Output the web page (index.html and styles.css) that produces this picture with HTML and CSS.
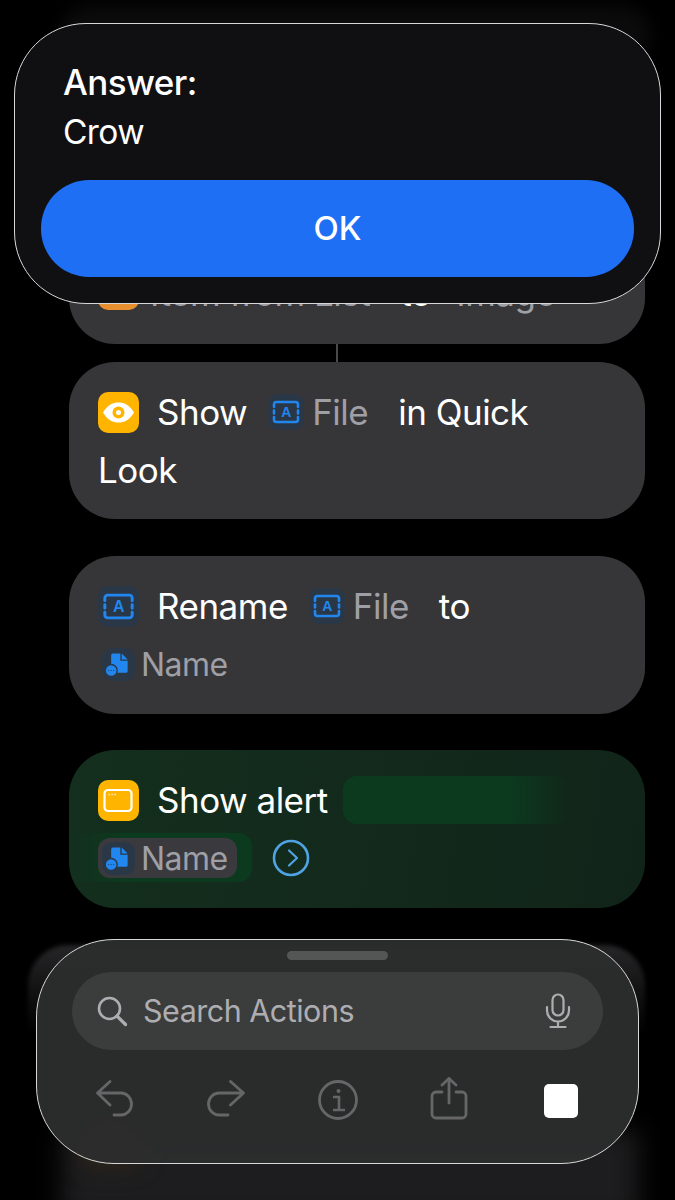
FILE: index.html
```html
<!DOCTYPE html>
<html lang="en">
<head>
    <meta charset="UTF-8">
    <meta name="viewport" content="width=device-width, initial-scale=1.0">
    <title>Show Alert Shortcut</title>
    <link rel="stylesheet" href="styles.css">
</head>
<body>

    <svg class="defs" width="0" height="0">
        <symbol id="file-box" viewBox="0 0 36 36">
            <path d="M6 13v-2.500A2.500 2.500 0 0 1 8.500 8h19a2.500 2.500 0 0 1 2.500 2.500V13M6 23v2.500A2.500 2.500 0 0 0 8.500 28h19a2.500 2.500 0 0 0 2.500-2.500V23M6 16.500v3M30 16.500v3" fill="none" stroke="#2186ee" stroke-width="2.600" stroke-linecap="round"/>
        </symbol>
        <symbol id="name-doc" viewBox="0 0 36 36">
            <path d="M12 6h8v8h8v11a2 2 0 0 1-2 2H12a2 2 0 0 1-2-2V8a2 2 0 0 1 2-2z" fill="#2186ee"/>
            <path d="M21.500 6l6.500 6.500h-6.500z" fill="#2186ee"/>
            <circle cx="10" cy="24.500" r="6.500" fill="#2186ee" stroke="#2a3747" stroke-width="1.500"/>
            <path d="M6.800 24.500h1M9.500 24.500h1M12.200 24.500h1" stroke="#2a3747" stroke-width="1.200"/>
        </symbol>
    </svg>

    <div class="under-alert"></div>

    <div class="flow">
        <div class="card card-first">
            <div class="row"></div>
            <div class="row">
                <span class="action-icon orange"></span>
                <span class="var">Item from List</span>
                <span>to</span>
                <span class="var">Image</span>
            </div>
        </div>
        <div class="connector"></div>

        <div class="card">
            <div class="row">
                <span class="action-icon yellow">
                    <svg width="41" height="41" viewBox="0 0 41 41">
                        <path d="M5 20.500C10 12.500 15 10.500 20.500 10.500S31 12.500 36 20.500C31 28.500 26 30.500 20.500 30.500S10 28.500 5 20.500z" fill="#fff"/>
                        <circle cx="20.500" cy="20.500" r="6" fill="#ffb400"/>
                        <circle cx="20.500" cy="20.500" r="2.500" fill="#fff"/>
                    </svg>
                </span>
                <span class="verb">Show</span>
                <span class="token"><span class="token-icon"><svg width="36" height="36" viewBox="0 0 36 36"><use href="#file-box"/><text x="18" y="23" text-anchor="middle" class="box-letter">A</text></svg></span><span class="var">File</span></span>
                <span class="after">in Quick</span>
            </div>
            <div class="row">Look</div>
        </div>

        <div class="card">
            <div class="row">
                <span class="action-icon blue-box">
                    <svg width="41" height="41" viewBox="0 0 36 36"><use href="#file-box"/><text x="18" y="23" text-anchor="middle" class="box-letter">A</text></svg>
                </span>
                <span class="verb">Rename</span>
                <span class="token"><span class="token-icon"><svg width="36" height="36" viewBox="0 0 36 36"><use href="#file-box"/><text x="18" y="23" text-anchor="middle" class="box-letter">A</text></svg></span><span class="var">File</span></span>
                <span class="after">to</span>
            </div>
            <div class="row">
                <span class="token name-token"><span class="token-icon small"><svg width="33" height="33"><use href="#name-doc"/></svg></span><span class="var var-name">Name</span></span>
            </div>
        </div>

        <div class="card card-green">
            <div class="row">
                <span class="action-icon yellow">
                    <svg width="41" height="41" viewBox="0 0 41 41">
                        <rect x="6.500" y="10" width="27" height="21" rx="3.500" fill="none" stroke="#fff" stroke-width="2.200"/>
                        <path d="M10.500 14.500h1.200M13.500 14.500h1.200M16.500 14.500h1.200" stroke="#fff" stroke-width="1.400"/>
                    </svg>
                </span>
                <span class="verb verb-tight">Show alert</span>
                <span class="glow-title"></span>
            </div>
            <div class="row row-name">
                <span class="glow-name"></span>
                <span class="token name-token name-filled"><span class="token-icon small"><svg width="33" height="33"><use href="#name-doc"/></svg></span><span class="var var-name">Name</span></span>
                <svg class="chevron" width="38" height="38" viewBox="0 0 38 38">
                    <circle cx="19" cy="19" r="17" fill="none" stroke="#4fa3e3" stroke-width="2.600"/>
                    <path d="M17 11.500L25 19l-8 7.500" fill="none" stroke="#4fa3e3" stroke-width="2.200" stroke-linecap="round" stroke-linejoin="round"/>
                </svg>
            </div>
        </div>
    </div>

    <!-- everything under the glass panels -->
    <div class="under-panel"></div>
    <div class="under-bottom"></div>
    <div class="under-tint"></div>

    <div class="alert">
        <div class="alert-title">Answer:</div>
        <div class="alert-text">Crow</div>
        <div class="alert-button">OK</div>
    </div>

    <div class="panel">
        <div class="handle"></div>
        <div class="search">
            <svg width="32" height="32" viewBox="0 0 32 32">
                <circle cx="13.500" cy="13.500" r="10.500" fill="none" stroke="#aeaeb2" stroke-width="2.600"/>
                <path d="M21 21l8.500 8.500" stroke="#aeaeb2" stroke-width="3.200" stroke-linecap="round"/>
            </svg>
            <span class="search-text">Search Actions</span>
            <svg class="mic" width="26" height="36" viewBox="0 0 26 36">
                <rect x="7.500" y="1.500" width="11" height="21" rx="5.500" fill="none" stroke="#aeaeb2" stroke-width="2.200"/>
                <path d="M2 14v3.500a11 11 0 0 0 22 0V14M13 28.500V33M5.500 34h15" fill="none" stroke="#aeaeb2" stroke-width="2.200" stroke-linecap="round"/>
            </svg>
        </div>
        <div class="tools">
            <svg width="40" height="40" viewBox="0 0 40 40" class="tool">
                <path d="M14 1.500L1.500 13 14 25M2 13h23a10.500 11 0 0 1 0 22h-7" fill="none" stroke="#666668" stroke-width="2.800" stroke-linecap="round" stroke-linejoin="round"/>
            </svg>
            <svg width="40" height="40" viewBox="0 0 40 40" class="tool">
                <path d="M23.500 1.500L36.500 13 23.500 25M36 13H12a10.500 11 0 0 0 0 22h9" fill="none" stroke="#666668" stroke-width="2.800" stroke-linecap="round" stroke-linejoin="round"/>
            </svg>
            <svg width="40" height="42" viewBox="0 0 40 42" class="tool">
                <circle cx="20" cy="21" r="18.500" fill="none" stroke="#666668" stroke-width="2.800"/>
                <circle cx="20.500" cy="12" r="2" fill="#666668"/>
                <path d="M15 18h6v13M15 31h12" fill="none" stroke="#666668" stroke-width="2.600"/>
            </svg>
            <svg width="38" height="46" viewBox="0 0 38 46" class="tool">
                <path d="M12 15H6a4 4 0 0 0-4 4v18a4 4 0 0 0 4 4h26a4 4 0 0 0 4-4V19a4 4 0 0 0-4-4h-6M19 26V1.500M12 8l7-6.500 7 6.500" fill="none" stroke="#666668" stroke-width="2.800" stroke-linecap="round" stroke-linejoin="round"/>
            </svg>
            <div class="stop"></div>
        </div>
    </div>

</body>
</html>
```

FILE: styles.css
```css
* {
    box-sizing: border-box;
}

html,
body {
    margin: 0;
    height: 1200px;
}

body {
    position: relative;
    overflow: hidden;
    background-color: #000;
    color: #fff;
    font-family: Inter, "Liberation Sans", sans-serif;
}

.defs {
    position: absolute;
}

.box-letter {
    font-family: "Liberation Sans", sans-serif;
    font-size: 14px;
    font-weight: 700;
    fill: #2186ee;
}

.flow {
    display: flex;
    flex-direction: column;
    width: 576px;
    margin-left: 69px;
    padding-top: 186px;
}

.card {
    height: 158px;
    margin-bottom: 36px;
    padding: 21px 0 0 29px;
    border-radius: 46px;
    background-color: #363638;
    font-size: 35px;
    letter-spacing: -0.5px;
}

.card-first {
    margin-bottom: 0;
    padding-top: 16px;
}

.connector {
    width: 2px;
    height: 18px;
    margin-left: 267px;
    background-color: #4a4a4c;
}

.connector + .card {
    height: 157px;
    margin-bottom: 37px;
}

.card-green {
    overflow: hidden;
    background: linear-gradient(100deg, #142f1e, #112419);
}

.row {
    display: flex;
    align-items: center;
    height: 58px;
}

.action-icon {
    flex: none;
    width: 41px;
    height: 41px;
    border-radius: 10px;
    margin-right: 18px;
}

.yellow {
    background-color: #ffb400;
}

.orange {
    margin-right: 11px;
    background-color: #e8902f;
}

.blue-box {
    background-color: #2a3747;
}

.verb {
    margin-right: 21px;
}

.verb-tight {
    margin-right: 15px;
}

.token {
    display: flex;
    align-items: center;
    gap: 8px;
}

.token-icon {
    display: flex;
    width: 36px;
    height: 36px;
    border-radius: 10px;
    background-color: #2a3747;
}

.token-icon.small {
    width: 33px;
    height: 33px;
}

.var {
    color: #9f9fa6;
}

.var-name {
    font-size: 32px;
}

.after {
    margin-left: 30px;
}

.card-first .row span:not(.action-icon) {
    margin-top: 8px;
}

.card-first .var:nth-of-type(2) {
    margin-right: 30px;
}

.card-first .var:last-child {
    margin-left: 25px;
}

.name-token {
    height: 40px;
    margin-left: 4px;
    gap: 6px;
}

.row-name {
    position: relative;
    margin-left: -29px;
    padding-left: 29px;
}

.name-filled {
    position: relative;
    width: 139px;
    margin-left: 0;
    padding-left: 4px;
    border-radius: 12px;
    background-color: #3a3a3e;
}

.glow-title {
    width: 227px;
    height: 48px;
    border-radius: 14px;
    background: linear-gradient(90deg, #0c3a1f 72%, rgba(12, 58, 31, 0));
}

.glow-name {
    position: absolute;
    left: 0;
    top: 4px;
    width: 183px;
    height: 49px;
    border-radius: 0 14px 14px 0;
    background: linear-gradient(90deg, rgba(12, 58, 31, 0), #0c3a1f 30%);
}

.chevron {
    position: relative;
    margin-left: 35px;
}

.under-alert {
    position: absolute;
    left: 60px;
    top: 6px;
    width: 590px;
    height: 60px;
    border-radius: 30px;
    background-color: #0b0b0c;
    filter: blur(8px);
}

.alert {
    position: absolute;
    left: 14px;
    top: 23px;
    width: 647px;
    height: 281px;
    padding: 33px 26px 0;
    border: 1.5px solid #d8d8da;
    border-radius: 72px;
    background-color: #101012;
}

.alert-title,
.alert-text {
    height: 50px;
    padding-left: 22px;
    font-size: 33.5px;
    line-height: 50px;
    letter-spacing: -0.6px;
}

.alert-title {
    font-size: 35px;
    font-weight: 500;
}

.alert-button {
    height: 97px;
    margin-top: 23px;
    border-radius: 48px;
    background-color: #1f6ff5;
    font-size: 33px;
    font-weight: 500;
    line-height: 97px;
    text-align: center;
}

.under-panel {
    position: absolute;
    left: 28px;
    top: 945px;
    width: 617px;
    height: 90px;
    border-radius: 40px 40px 0 0;
    background: linear-gradient(#262628, rgba(38, 38, 40, 0));
    filter: blur(2px);
}

.under-bottom {
    position: absolute;
    left: 62px;
    top: 1130px;
    width: 576px;
    height: 90px;
    background-color: #1d1d1f;
    filter: blur(12px);
}

.under-tint {
    position: absolute;
    left: 85px;
    top: 1115px;
    width: 50px;
    height: 45px;
    background-color: #3a2a14;
    filter: blur(14px);
}

.panel {
    position: absolute;
    left: 36px;
    top: 939px;
    width: 603px;
    height: 225px;
    padding: 11px 35px 0;
    border: 1.5px solid #d8d8d8;
    border-radius: 78px;
    background-color: rgba(43, 44, 44, 0.97);
}

.handle {
    width: 101px;
    height: 9px;
    margin: 0 auto 12px;
    border-radius: 5px;
    background-color: #545555;
}

.search {
    display: flex;
    align-items: center;
    height: 78px;
    padding: 0 32px 0 24px;
    border-radius: 39px;
    background-color: #3b3c3c;
}

.search-text {
    flex-grow: 1;
    margin-left: 15px;
    padding-bottom: 2px;
    color: #aeaeb2;
    font-size: 30.5px;
    letter-spacing: -0.5px;
}

.tools {
    display: flex;
    align-items: center;
    height: 72px;
    margin-top: 14px;
    padding-left: 24px;
}

.tool {
    flex: none;
}

.tool:nth-child(1),
.tool:nth-child(2) {
    margin-right: 71px;
}

.tool:nth-child(3) {
    margin-right: 72px;
}

.tool:nth-child(4) {
    margin-right: 76px;
}

.stop {
    width: 34px;
    height: 34px;
    margin-top: 2px;
    border-radius: 5px;
    background-color: #fff;
}
```
